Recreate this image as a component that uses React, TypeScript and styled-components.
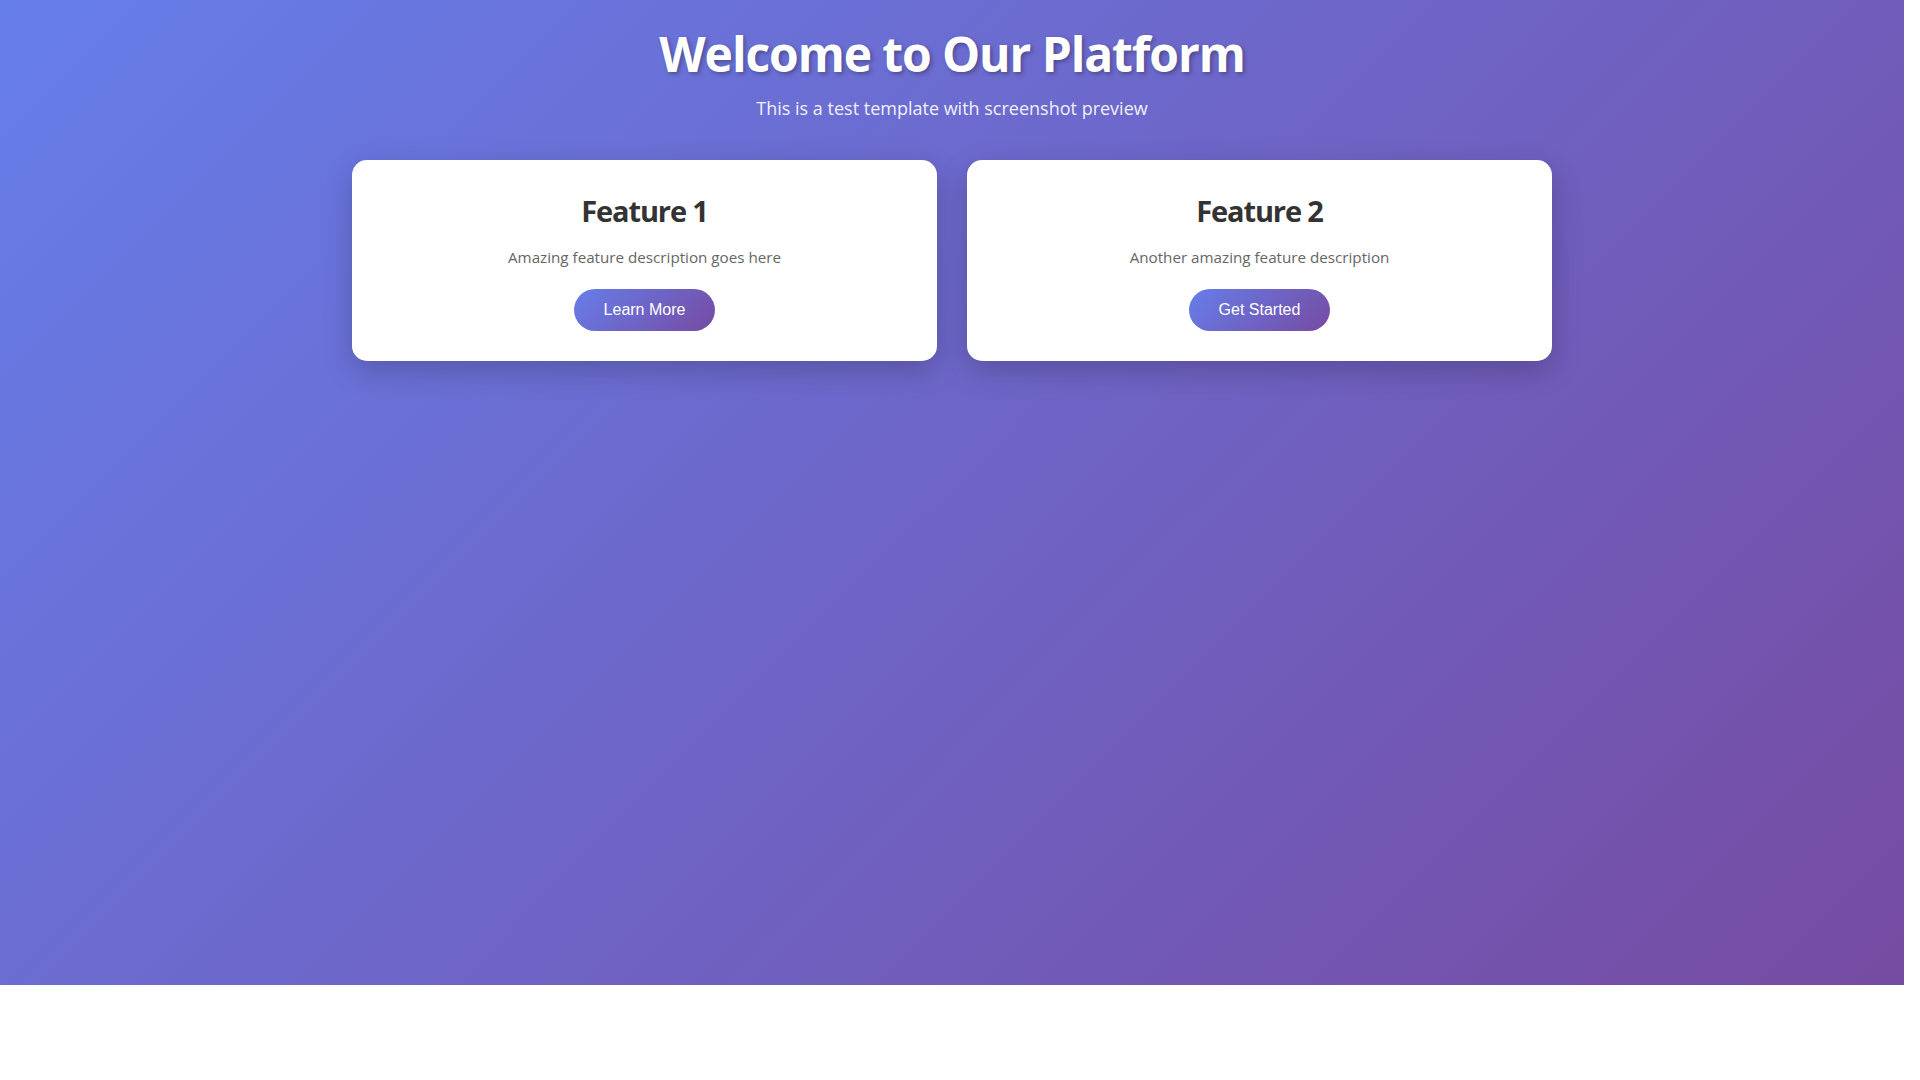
import React from "react";
import styled, { createGlobalStyle } from "styled-components";

const GlobalStyle = createGlobalStyle`
  html, body {
    margin: 0;
    padding: 0;
    background: #ffffff;
  }
  body {
    font-family: "Open Sans", "Noto Sans", sans-serif;
  }
  * { box-sizing: border-box; }
`;

const Page = styled.main`
  width: 1904px;
  height: 985px;
  padding: 25px 20px 20px;
  background: linear-gradient(135deg, #667eea 0%, #764ba2 100%);
  display: flex;
  flex-direction: column;
  align-items: center;
`;

const Header = styled.header`
  display: flex;
  flex-direction: column;
  align-items: center;
  color: #ffffff;
  text-align: center;
`;

const Title = styled.h1`
  margin: 0;
  font-size: 48px;
  line-height: 58px;
  font-weight: 700;
  letter-spacing: -1.1px;
  text-shadow: 2px 2px 4px rgba(0, 0, 0, 0.3);
`;

const Subtitle = styled.p`
  margin: 13px 0 0;
  font-size: 18px;
  line-height: 24px;
  opacity: 0.9;
`;

const Grid = styled.section`
  margin-top: 40px;
  width: 1200px;
  display: grid;
  grid-template-columns: repeat(2, 1fr);
  gap: 30px;
`;

const Card = styled.article`
  background: #ffffff;
  border-radius: 15px;
  padding: 33px 30px 30px;
  display: flex;
  flex-direction: column;
  align-items: center;
  text-align: center;
  box-shadow: 0 10px 30px rgba(0, 0, 0, 0.2);
`;

const CardTitle = styled.h2`
  margin: 0;
  font-size: 29px;
  line-height: 36px;
  font-weight: 700;
  letter-spacing: -1.1px;
  color: #333333;
`;

const CardText = styled.p`
  margin: 17px 0 0;
  font-size: 15.2px;
  line-height: 22px;
  color: #666666;
`;

const Button = styled.button`
  margin-top: 21px;
  border: none;
  border-radius: 25px;
  padding: 11px 30px 12px;
  font-family: "Liberation Sans", Arial, sans-serif;
  font-size: 16px;
  line-height: 19px;
  color: #ffffff;
  background: linear-gradient(135deg, #667eea 0%, #764ba2 100%);
  cursor: pointer;
`;

const features = [
  { title: "Feature 1", text: "Amazing feature description goes here", cta: "Learn More" },
  { title: "Feature 2", text: "Another amazing feature description", cta: "Get Started" },
];

export default function App() {
  return (
    <>
      <GlobalStyle />
      <Page>
        <Header>
          <Title>Welcome to Our Platform</Title>
          <Subtitle>This is a test template with screenshot preview</Subtitle>
        </Header>
        <Grid>
          {features.map((f) => (
            <Card key={f.title}>
              <CardTitle>{f.title}</CardTitle>
              <CardText>{f.text}</CardText>
              <Button>{f.cta}</Button>
            </Card>
          ))}
        </Grid>
      </Page>
    </>
  );
}
